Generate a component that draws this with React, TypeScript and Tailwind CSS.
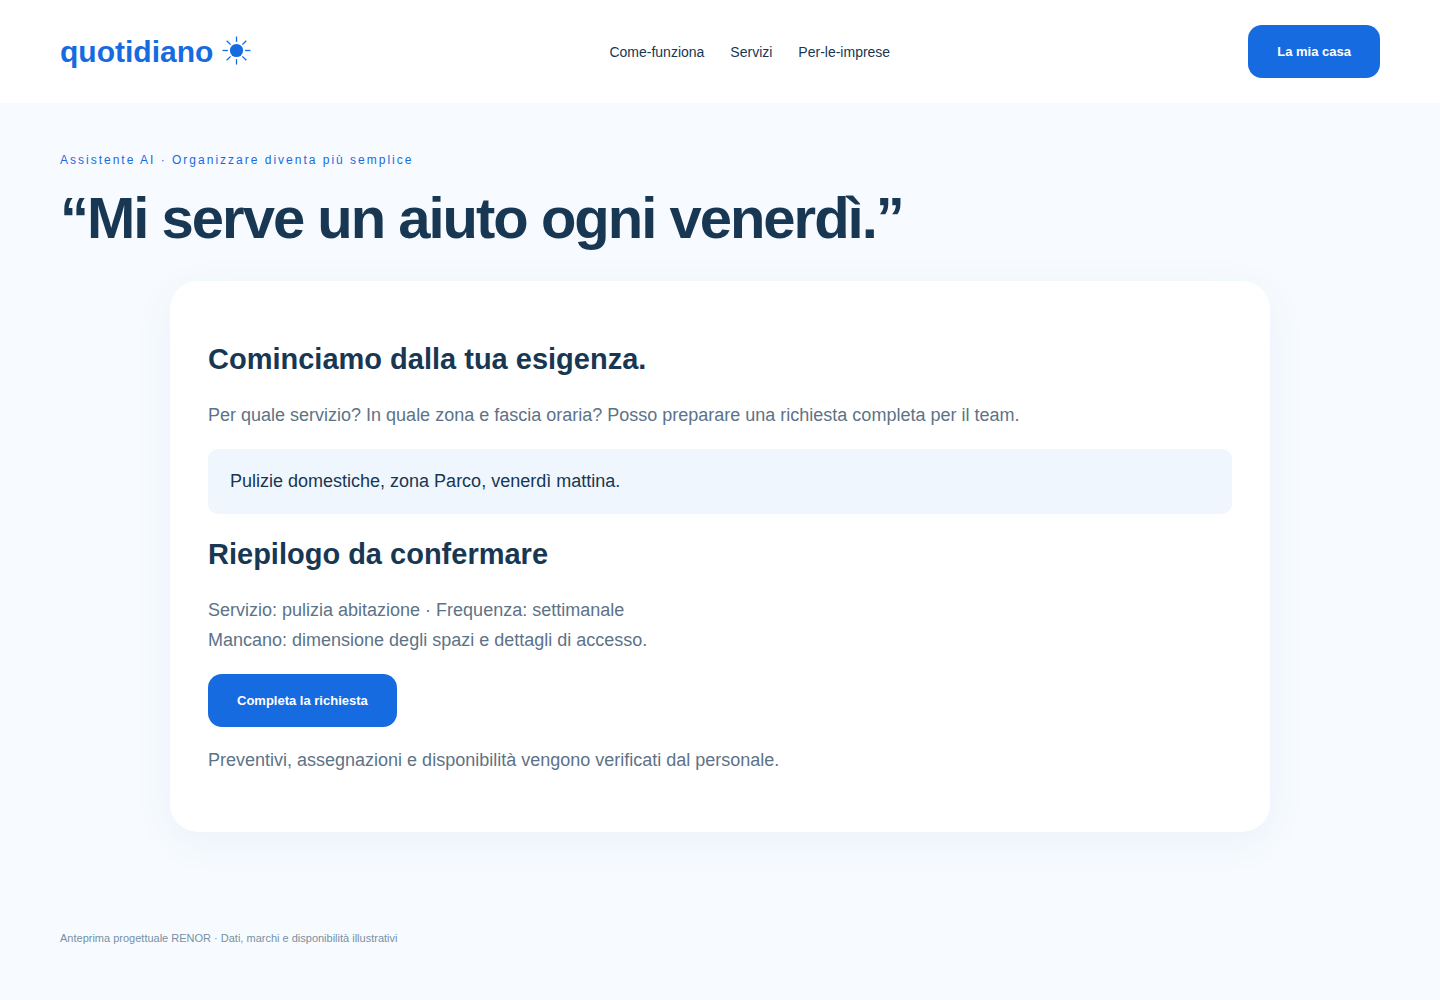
import React from 'react';

const NAV_LINKS = [
  { label: 'Come-funziona', href: '#come-funziona' },
  { label: 'Servizi', href: '#servizi' },
  { label: 'Per-le-imprese', href: '#per-le-imprese' },
];

const STRAIGHT_RAYS = [0, 90, 180, 270];
const DIAGONAL_RAYS = [45, 135, 225, 315];

function SunIcon() {
  return (
    <svg className="mb-[2px]" width="30" height="30" viewBox="0 0 30 30" fill="none" stroke="currentColor" strokeWidth="1.3" aria-hidden="true">
      <circle cx="15.5" cy="14.5" r="6.6" fill="currentColor" stroke="none" />
      {STRAIGHT_RAYS.map((angle) => (
        <path key={angle} d="M15.5 0.5v5.4" transform={`rotate(${angle} 15.5 14.5)`} />
      ))}
      {DIAGONAL_RAYS.map((angle) => (
        <path key={angle} d="M15.5 0.6v5.6" transform={`rotate(${angle} 15.5 14.5)`} />
      ))}
    </svg>
  );
}

function Button({ children }: { children: React.ReactNode }) {
  return (
    <button type="button" className="rounded-[14px] bg-[#166be1] px-[29px] py-4 text-[13px] leading-[21px] font-bold text-white">
      {children}
    </button>
  );
}

export default function App() {
  return (
    <div className="min-h-screen bg-[#f7fbff] font-['Liberation_Sans',Arial,sans-serif] text-[#173753]">
      <header className="flex items-center justify-between bg-white px-15 py-[25px]">
        <a href="#" className="flex items-center gap-2 text-[30px] leading-[45px] font-bold text-[#166be1]">
          quotidiano <SunIcon />
        </a>
        <nav className="flex gap-[26px] text-sm">
          {NAV_LINKS.map((link) => (
            <a key={link.href} href={link.href}>{link.label}</a>
          ))}
        </nav>
        <Button>La mia casa</Button>
      </header>

      <main className="px-15 pt-12">
        <p className="text-xs leading-[18px] tracking-[2px] text-[#166be1]">Assistente AI · Organizzare diventa più semplice</p>
        <h1 className="mt-[18px] text-[58px] leading-[62px] font-bold tracking-[-2px]">“Mi serve un aiuto ogni venerdì.”</h1>

        <section className="mx-auto mt-8 max-w-[1100px] rounded-[28px] bg-white px-[38px] pt-14 pb-[57px] text-lg leading-[30px] shadow-[0_10px_40px_#2850a00f]">
          <h2 className="text-[29px] leading-[44px] font-bold">Cominciamo dalla tua esigenza.</h2>
          <p className="mt-[19px] text-[#5c7387]">Per quale servizio? In quale zona e fascia oraria? Posso preparare una richiesta completa per il team.</p>
          <div className="mt-[19px] rounded-[10px] bg-[#f0f6fe] px-[22px] pt-[17px] pb-[18px]">Pulizie domestiche, zona Parco, venerdì mattina.</div>
          <h2 className="mt-[18px] text-[29px] leading-[44px] font-bold">Riepilogo da confermare</h2>
          <p className="mt-[19px] mb-[19px] text-[#5c7387]">
            Servizio: pulizia abitazione · Frequenza: settimanale
            <br />
            Mancano: dimensione degli spazi e dettagli di accesso.
          </p>
          <Button>Completa la richiesta</Button>
          <p className="mt-[18px] text-[#5c7387]">Preventivi, assegnazioni e disponibilità vengono verificati dal personale.</p>
        </section>
      </main>

      <footer className="px-15 pt-[97px] pb-12 text-[11px] leading-[18px] text-[#7890a3]">
        Anteprima progettuale RENOR · Dati, marchi e disponibilità illustrativi
      </footer>
    </div>
  );
}
